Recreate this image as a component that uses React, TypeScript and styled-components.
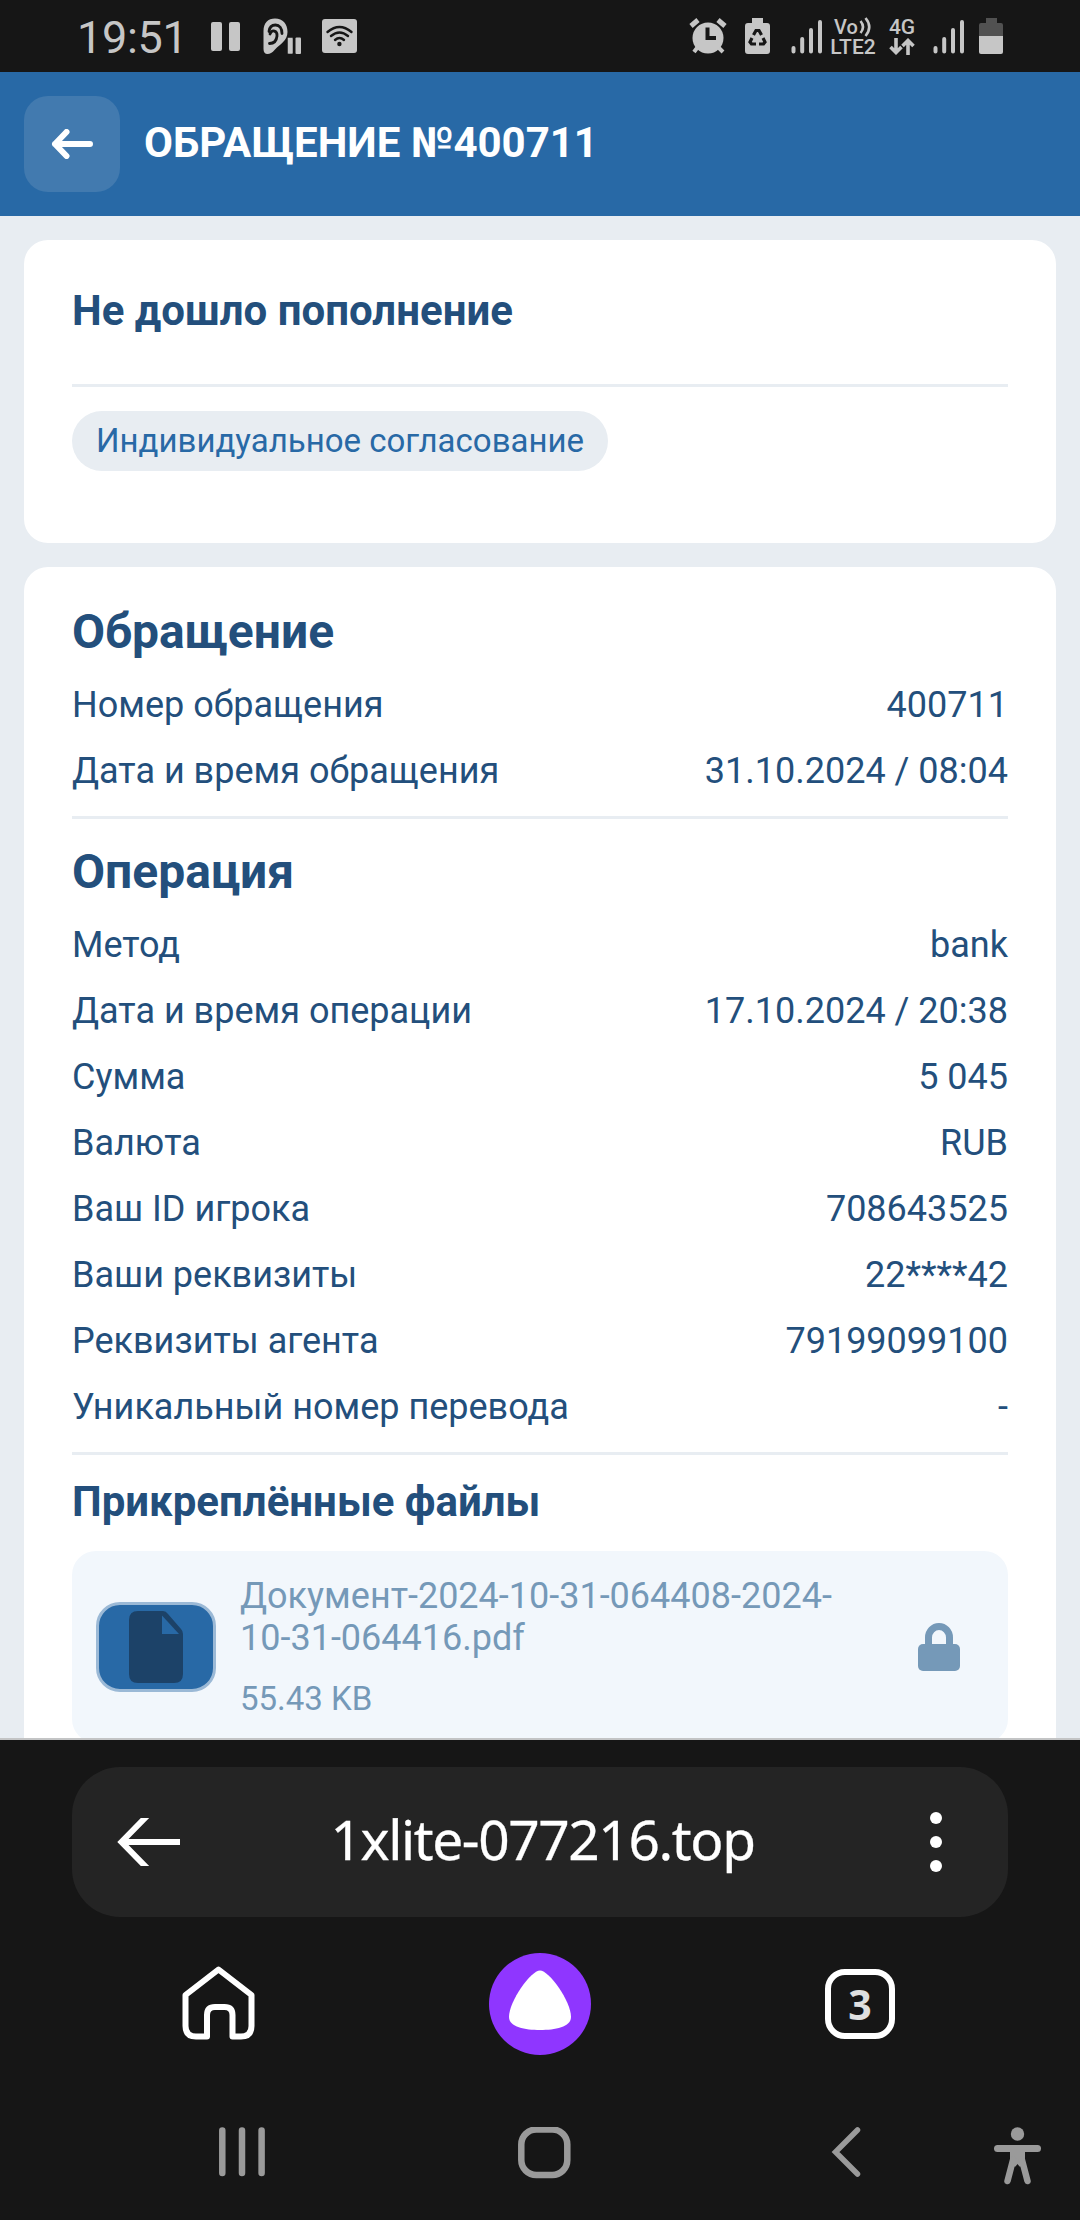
import React from 'react';
import styled, { createGlobalStyle } from 'styled-components';

const Global = createGlobalStyle`
  *, *::before, *::after { box-sizing: border-box; }
  html, body { margin: 0; padding: 0; background: #161616; }
  body { font-family: Roboto, "Liberation Sans", sans-serif; }
  svg { display: block; flex: none; }
`;

const Screen = styled.div`
  width: 1080px;
  height: 2220px;
  display: flex;
  flex-direction: column;
  background: #161616;
  overflow: hidden;
`;

const StatusBar = styled.header`
  height: 72px;
  flex: none;
  display: flex;
  justify-content: space-between;
  padding: 0 77px;
  color: #c6c6c6;
`;

const StatusGroup = styled.div`
  display: flex;
  align-items: center;
`;

const Clock = styled.span`
  width: 112px;
  font-size: 45px;
  letter-spacing: -0.3px;
  line-height: 72px;
  padding-top: 3px;
  white-space: nowrap;
`;

const StatusGlyph = styled.svg<{ $gap?: number }>`
  margin-left: ${(p) => p.$gap ?? 0}px;
`;

const NetLabel = styled.div<{ $gap: number; $w: number }>`
  margin-left: ${(p) => p.$gap}px;
  width: ${(p) => p.$w}px;
  display: flex;
  flex-direction: column;
  align-items: center;
  padding-top: 1px;
  font-weight: 500;
  white-space: nowrap;
`;

const NetLine = styled.span<{ $size?: number }>`
  display: flex;
  align-items: center;
  gap: 1px;
  height: 20px;
  font-size: ${(p) => p.$size ?? 21}px;
  line-height: 20px;
`;

const AppBar = styled.div`
  height: 144px;
  flex: none;
  display: flex;
  align-items: center;
  gap: 24px;
  padding: 0 24px;
  background: #2869a6;
`;

const BackButton = styled.button`
  width: 96px;
  height: 96px;
  border: 0;
  padding: 0;
  border-radius: 24px;
  background: #427aaf;
  display: flex;
  align-items: center;
  justify-content: center;
`;

const AppTitle = styled.h1`
  margin: 0 0 2px;
  font-size: 42px;
  line-height: 48px;
  font-weight: 700;
  color: #fff;
`;

const Page = styled.main`
  height: 1524px;
  flex: none;
  overflow: hidden;
  display: flex;
  flex-direction: column;
  gap: 24px;
  padding: 24px 24px 0;
  background: #e8edf2;
  border-bottom: 2px solid #c3c4c5;
  color: #234f7c;
`;

const Card = styled.section<{ $h?: number; $top: number }>`
  flex: none;
  height: ${(p) => (p.$h ? `${p.$h}px` : 'auto')};
  padding: ${(p) => p.$top}px 48px 24px;
  border-radius: 24px;
  background: #fff;
`;

const Heading = styled.h2<{ $size: number; $line: number; $after?: number }>`
  margin: 0 0 ${(p) => p.$after ?? 0}px;
  font-size: ${(p) => p.$size}px;
  line-height: ${(p) => p.$line}px;
  font-weight: 700;
`;

const Divider = styled.hr<{ $before: number; $after: number }>`
  height: 3px;
  border: 0;
  margin: ${(p) => p.$before}px 0 ${(p) => p.$after}px;
  background: #e8edf2;
`;

const Chip = styled.span`
  display: inline-flex;
  align-items: center;
  height: 60px;
  padding: 0 24px;
  border-radius: 30px;
  background: #e8edf2;
  color: #2869a6;
  font-size: 33px;
  line-height: 60px;
`;

const Rows = styled.dl`
  margin: 0;
  display: flex;
  flex-direction: column;
`;

const Row = styled.div`
  height: 66px;
  display: flex;
  justify-content: space-between;
  align-items: center;
  font-size: 36px;
  line-height: 42px;
`;

const Label = styled.dt``;

const Value = styled.dd`
  margin: 0;
`;

const FileCard = styled.div`
  height: 192px;
  display: flex;
  align-items: center;
  padding: 24px 48px 24px 24px;
  border-radius: 24px;
  background: #f2f7fc;
  color: #7599b8;
`;

const FileThumb = styled.div`
  width: 120px;
  height: 90px;
  flex: none;
  display: flex;
  align-items: center;
  justify-content: center;
  border: 3px solid #9bb9d6;
  border-radius: 24px;
  background: #2869a6;
`;

const FileInfo = styled.div`
  flex: 1;
  height: 144px;
  margin: 0 60px 0 24px;
  display: flex;
  flex-direction: column;
  justify-content: space-between;
`;

const FileName = styled.span`
  font-size: 36px;
  line-height: 42px;
`;

const FileSize = styled.span`
  font-size: 33px;
  line-height: 40px;
`;

const BrowserBar = styled.nav`
  flex: none;
  height: 480px;
  display: flex;
  flex-direction: column;
  padding-top: 27px;
`;

const AddressBar = styled.div`
  height: 150px;
  margin: 0 72px;
  padding: 0 66px 0 45px;
  display: flex;
  align-items: center;
  justify-content: space-between;
  border-radius: 48px;
  background: #242424;
`;

const Address = styled.span`
  margin-right: 25px;
  padding-bottom: 6px;
  text-align: center;
  font-family: "Noto Sans", "Open Sans", sans-serif;
  font-size: 55px;
  line-height: 70px;
  letter-spacing: -1.4px;
  -webkit-text-stroke: 0.3px #fff;
  white-space: nowrap;
  color: #fff;
`;

const BrowserActions = styled.div`
  height: 174px;
  display: grid;
  grid-template-columns: 74px 102px 70px;
  justify-content: space-between;
  align-items: center;
  padding: 0 185px 0 181px;
`;

const TabsButton = styled.button`
  width: 70px;
  height: 70px;
  padding: 0 0 1px;
  border: 6px solid #fff;
  border-radius: 20px;
  background: transparent;
  color: #e0e0e0;
  font: 700 41px/56px "Noto Sans", sans-serif;
`;

const SystemNav = styled.div`
  flex: 1;
  display: grid;
  grid-template-columns: 299px 307px 167px 54px;
  align-items: start;
  padding: 36px 0 0 218px;
  color: #9a9a9a;
`;

const request: [string, string][] = [
  ['Номер обращения', '400711'],
  ['Дата и время обращения', '31.10.2024 / 08:04'],
];

const operation: [string, string][] = [
  ['Метод', 'bank'],
  ['Дата и время операции', '17.10.2024 / 20:38'],
  ['Сумма', '5 045'],
  ['Валюта', 'RUB'],
  ['Ваш ID игрока', '708643525'],
  ['Ваши реквизиты', '22****42'],
  ['Реквизиты агента', '79199099100'],
  ['Уникальный номер перевода', '-'],
];

const Details = ({ items }: { items: [string, string][] }) => (
  <Rows>
    {items.map(([label, value]) => (
      <Row key={label}>
        <Label>{label}</Label>
        <Value>{value}</Value>
      </Row>
    ))}
  </Rows>
);

const Signal = ({ gap }: { gap: number }) => (
  <StatusGlyph $gap={gap} width="32" height="36" viewBox="0 0 32 36" stroke="currentColor" strokeWidth="4" strokeLinecap="round">
    <path d="M3.500 30V33.500M12.200 21V33.500M21 12V33.500M30 4V33.500" />
  </StatusGlyph>
);

export default function App() {
  return (
    <Screen>
      <Global />
      <StatusBar>
        <StatusGroup>
          <Clock>19:51</Clock>
          <StatusGlyph $gap={22} width="29" height="29" viewBox="0 0 29 29" fill="currentColor">
            <rect width="11" height="29" rx="2" />
            <rect x="18" width="11" height="29" rx="2" />
          </StatusGlyph>
          <StatusGlyph $gap={23} width="39" height="36" viewBox="0 0 39 36" fill="none">
            <path d="M0.500 13C0.500 5 5 0.500 12 0.500C20 0.500 24.500 6 24.500 14C24.500 23 17 26 12 31.500C9 35 7 36 4.500 36C2 36 0.500 34.500 0.500 31Z" fill="currentColor" />
            <path d="M6 13.500C6.500 9 9 7 12.500 7C16.500 7 19 10.500 19 15.500" stroke="#161616" strokeWidth="2.800" strokeLinecap="round" />
            <path d="M7 16C9 11 14.500 12.500 14 18C13.500 23 10.500 25.500 6.500 25.500" stroke="#161616" strokeWidth="2.800" strokeLinecap="round" />
            <rect x="24.500" y="19.500" width="5.500" height="16.500" rx="1" fill="currentColor" stroke="#161616" strokeWidth="0.500" />
            <rect x="32.500" y="19.500" width="5.500" height="16.500" rx="1" fill="currentColor" />
          </StatusGlyph>
          <StatusGlyph $gap={20} width="35" height="34" viewBox="0 0 35 34" fill="none">
            <rect width="35" height="34" rx="3" fill="currentColor" />
            <path d="M5.500 13Q17.500 3 29.500 13M9 17Q17.500 10 26 17M13 21Q17.500 17 22 21" stroke="#161616" strokeWidth="2.400" strokeLinecap="round" />
            <circle cx="17.400" cy="25" r="2.200" fill="#161616" />
          </StatusGlyph>
        </StatusGroup>
        <StatusGroup>
          <StatusGlyph width="38" height="36" viewBox="0 0 38 36" fill="none" stroke="currentColor">
            <path d="M2 8L9 2M29 2L36 8" strokeWidth="5" />
            <path d="M8 30L5 34M30 30L34 34" strokeWidth="4" />
            <circle cx="19" cy="20" r="15.500" fill="currentColor" stroke="none" />
            <path d="M18.500 9.500V20H27" stroke="#161616" strokeWidth="4" />
          </StatusGlyph>
          <StatusGlyph $gap={18} width="25" height="36" viewBox="0 0 25 36">
            <path d="M7 0H18V5H22Q25 5 25 8V33Q25 36 22 36H3Q0 36 0 33V8Q0 5 3 5H7Z" fill="currentColor" />
            <path d="M8.500 17L11 12.500H14L16.500 17M18 20L20 24L18.500 26H14M11 26H6.500L5 24L7 20" fill="none" stroke="#161616" strokeWidth="3.200" />
          </StatusGlyph>
          <Signal gap={20} />
          <NetLabel $gap={8} $w={46}>
            <NetLine $size={20}>
              Vo
              <svg width="13" height="20" viewBox="0 0 13 20" fill="none" stroke="currentColor" strokeWidth="2.600">
                <path d="M1.500 4Q6.500 10 1.500 16M6.500 1Q14 10 6.500 19" />
              </svg>
            </NetLine>
            <NetLine>LTE2</NetLine>
          </NetLabel>
          <NetLabel $gap={12} $w={28}>
            <NetLine>4G</NetLine>
            <NetLine>
              <svg width="26" height="17" viewBox="0 0 26 17" fill="none" stroke="currentColor" strokeWidth="3.600">
                <path d="M7 0V14M1.500 9L7 14.500L12.500 9M19 17V3M13.500 8L19 2.500L24.500 8" />
              </svg>
            </NetLine>
          </NetLabel>
          <Signal gap={16} />
          <StatusGlyph $gap={15} width="24" height="36" viewBox="0 0 24 36">
            <path d="M7 0H18V5H22Q24 5 24 7V18H0V7Q0 5 2 5H7Z" fill="#515151" />
            <path d="M0 18H24V34Q24 36 22 36H2Q0 36 0 34Z" fill="currentColor" />
          </StatusGlyph>
        </StatusGroup>
      </StatusBar>

      <AppBar>
        <BackButton aria-label="Назад">
          <svg width="42" height="30" viewBox="0 0 42 30" fill="none" stroke="#fff" strokeWidth="6" strokeLinecap="round" strokeLinejoin="round">
            <path d="M39 15H4M15.500 3L4 15L15.500 27" />
          </svg>
        </BackButton>
        <AppTitle>ОБРАЩЕНИЕ №400711</AppTitle>
      </AppBar>

      <Page>
        <Card $h={303} $top={46}>
          <Heading $size={42} $line={50}>Не дошло пополнение</Heading>
          <Divider $before={48} $after={24} />
          <Chip>Индивидуальное согласование</Chip>
        </Card>
        <Card $top={37}>
          <Heading $size={48} $line={56} $after={12}>Обращение</Heading>
          <Details items={request} />
          <Divider $before={12} $after={25} />
          <Heading $size={48} $line={56} $after={12}>Операция</Heading>
          <Details items={operation} />
          <Divider $before={12} $after={22} />
          <Heading $size={42} $line={50} $after={24}>Прикреплённые файлы</Heading>
          <FileCard>
            <FileThumb>
              <svg width="54" height="72" viewBox="0 0 54 72">
                <path d="M9 0H34Q37 0 39 3L52 18Q54 20 54 23V63Q54 72 45 72H9Q0 72 0 63V9Q0 0 9 0Z" fill="#1c4268" />
                <path d="M33 4.500V23H50Z" fill="#2869a6" />
              </svg>
            </FileThumb>
            <FileInfo>
              <FileName>Документ-2024-10-31-064408-2024-10-31-064416.pdf</FileName>
              <FileSize>55.43 KB</FileSize>
            </FileInfo>
            <svg width="42" height="48" viewBox="0 0 42 48">
              <rect y="21" width="42" height="27" rx="5" fill="#7599b8" />
              <path d="M10.500 23V14.500A10.500 11 0 0 1 31.500 14.500V23" fill="none" stroke="#7599b8" strokeWidth="7" />
            </svg>
          </FileCard>
        </Card>
      </Page>

      <BrowserBar>
        <AddressBar>
          <svg width="63" height="48" viewBox="0 0 63 48" fill="none" stroke="#fff" strokeWidth="6">
            <path d="M63 24H5M30 -2L4.500 24L30 50" />
          </svg>
          <Address>1xlite-077216.top</Address>
          <svg width="12" height="60" viewBox="0 0 12 60" fill="#fff">
            <circle cx="6" cy="6" r="6" />
            <circle cx="6" cy="30" r="6" />
            <circle cx="6" cy="54" r="6" />
          </svg>
        </AddressBar>
        <BrowserActions>
          <svg width="74" height="76" viewBox="0 0 74 76" fill="none" stroke="#fff" strokeWidth="6" strokeLinejoin="round">
            <path d="M4.500 29L37.500 3.500L70.500 29V60Q70.500 70.500 60 70.500H51.500V49Q51.500 41 43.500 41H34Q26 41 26 49V70.500H15Q4.500 70.500 4.500 60Z" />
          </svg>
          <svg width="102" height="102" viewBox="0 0 102 102">
            <circle cx="51" cy="51" r="51" fill="#8f36ff" />
            <path d="M51 17.500C60 17.500 82 48 82 64C82 74 66 77 51 77C36 77 20 74 20 64C20 48 42 17.500 51 17.500Z" fill="#fff" />
          </svg>
          <TabsButton>3</TabsButton>
        </BrowserActions>
        <SystemNav>
          <svg width="48" height="52" viewBox="0 0 48 52" stroke="currentColor" strokeWidth="6.500" strokeLinecap="round">
            <path d="M4.300 3.500V46M24 3.500V46M43.600 3.500V46" />
          </svg>
          <svg width="54" height="54" viewBox="0 0 54 54" fill="none" stroke="currentColor" strokeWidth="6.500">
            <rect x="4.300" y="2.500" width="46" height="45.500" rx="15" />
          </svg>
          <svg width="48" height="54" viewBox="0 0 48 54" fill="none" stroke="currentColor" strokeWidth="5.500" strokeLinecap="round">
            <path d="M33.500 3L11.500 25L33.500 47" />
          </svg>
          <svg width="54" height="62" viewBox="0 0 54 62" fill="none" stroke="currentColor" strokeLinecap="round">
            <circle cx="26.500" cy="7" r="6.700" fill="currentColor" stroke="none" />
            <path d="M6.500 21.500H46.500" strokeWidth="7" />
            <path d="M19 22H34V32L30 39.500H28.500L26.500 37L24.500 39.500H23L19 32Z" fill="currentColor" stroke="none" />
            <path d="M22 33L16.500 54M31 33L36.500 54" strokeWidth="6.500" />
          </svg>
        </SystemNav>
      </BrowserBar>
    </Screen>
  );
}
